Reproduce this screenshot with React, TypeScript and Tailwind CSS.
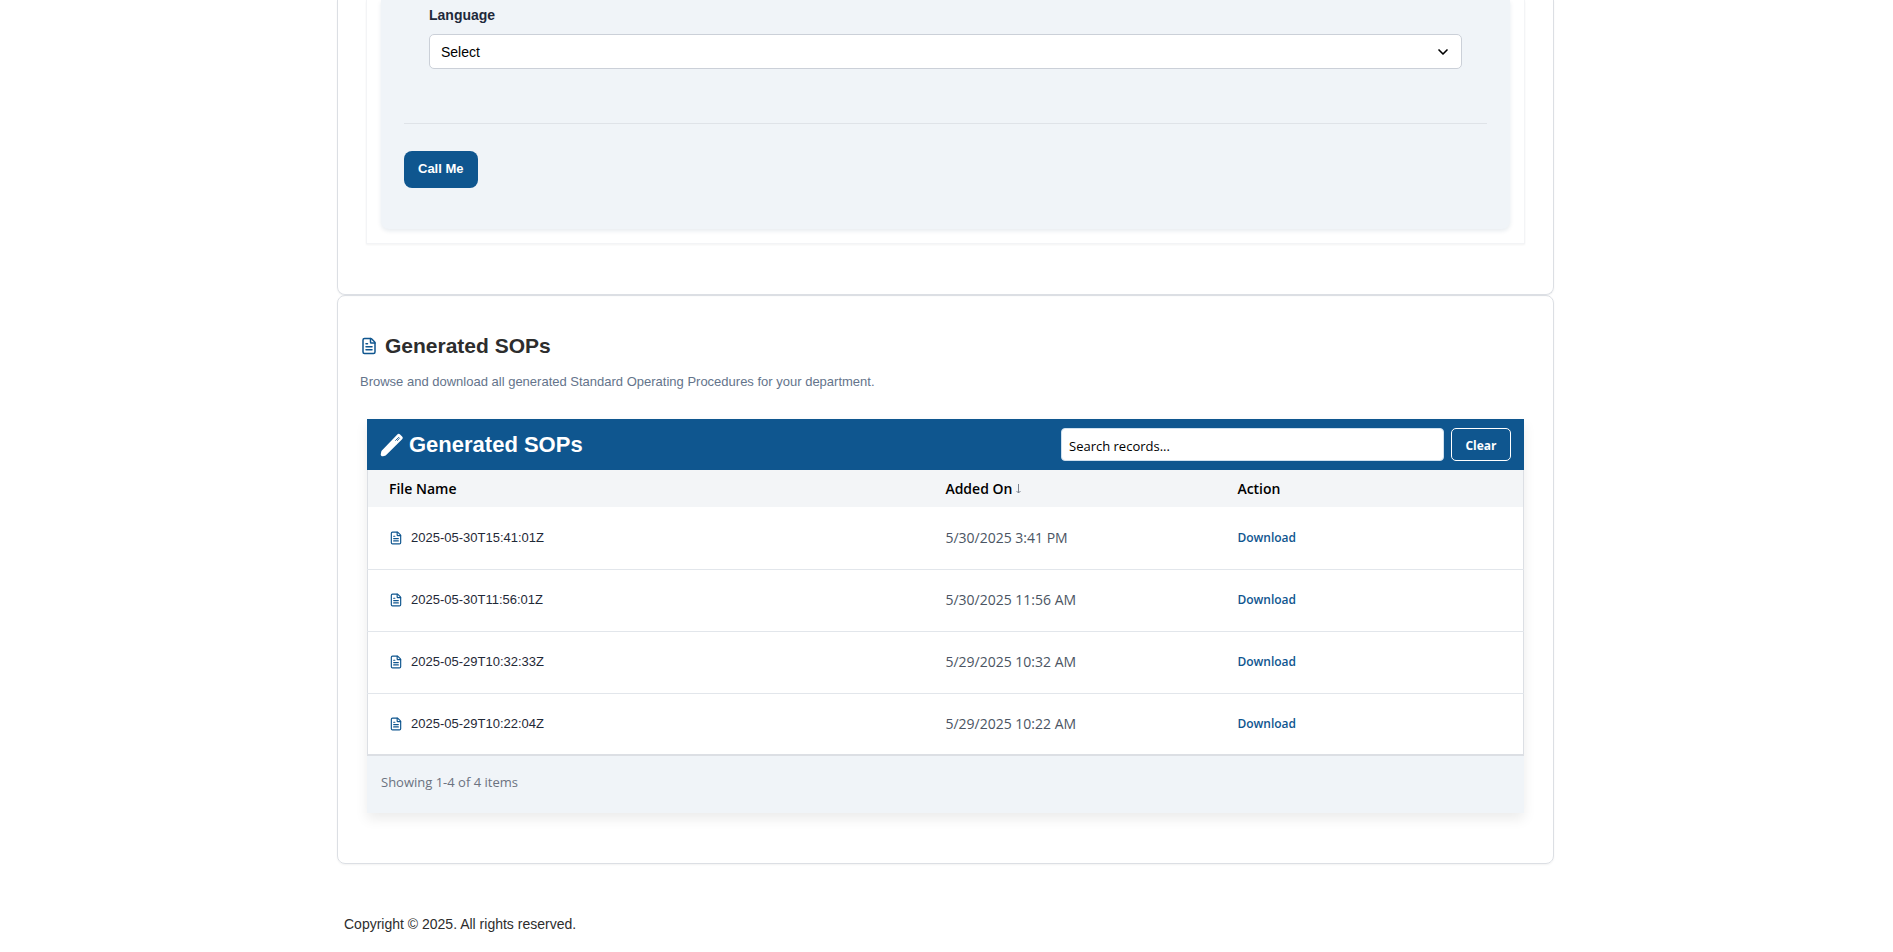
import React from 'react';
import { ChevronDown, FileText } from 'lucide-react';

interface SopFile {
  name: string;
  addedOn: string;
}

const files: SopFile[] = [
  { name: '2025-05-30T15:41:01Z', addedOn: '5/30/2025 3:41 PM' },
  { name: '2025-05-30T11:56:01Z', addedOn: '5/30/2025 11:56 AM' },
  { name: '2025-05-29T10:32:33Z', addedOn: '5/29/2025 10:32 AM' },
  { name: '2025-05-29T10:22:04Z', addedOn: '5/29/2025 10:22 AM' },
];

const PencilIcon: React.FC = () => (
  <svg className="h-6 w-6" viewBox="0 0 24 24" fill="none" aria-hidden="true">
    <path
      d="M17.3 1.4a2 2 0 0 1 2.8 0l2 2a2 2 0 0 1 0 2.8L6.2 22.1a2.5 2.5 0 0 1-1.2.7l-2 .5A1.8 1.8 0 0 1 .8 21.1l.4-2.2a2.5 2.5 0 0 1 .7-1.3z"
      fill="#fff"
    />
    <path d="M15.6 7.4l3-3 .9.9-2.2 2.2" stroke="#0f568f" strokeWidth="0.9" strokeLinecap="round" />
  </svg>
);

const SortDownIcon: React.FC = () => (
  <svg className="h-[10px] w-[5px]" viewBox="0 0 5 10" fill="none" aria-hidden="true">
    <path d="M2.5 0v9M.5 7l2 2 2-2" stroke="#7b828e" />
  </svg>
);

const CallForm: React.FC = () => (
  <section className="rounded-b-lg border border-t-0 border-[#dcdfe4] px-7 pb-[50px] shadow-xs">
    <div className="border border-t-0 border-[#f3f4f6] px-[14px] pb-[14px] shadow-xs">
      <form className="rounded-b-lg bg-[#f0f4f8] px-[23px] pt-1 pb-[41px] shadow-[0_2px_4px_rgba(15,60,100,0.1)]" onSubmit={(e) => e.preventDefault()}>
        <div className="px-[25px]">
          <label htmlFor="language" className="block text-sm leading-[22px] font-bold text-[#1e293b]">
            Language
          </label>
          <div className="relative mt-2">
            <select
              id="language"
              className="block h-[35px] w-full appearance-none rounded-[5px] border border-[#cbd0d8] bg-white px-[11px] text-sm text-black"
            >
              <option>Select</option>
            </select>
            <ChevronDown
              size={16}
              strokeWidth={2.5}
              className="pointer-events-none absolute top-1/2 right-[11px] -translate-y-1/2 text-black"
            />
          </div>
        </div>
        <hr className="mt-[54px] border-[#dfe3e8]" />
        <button
          type="submit"
          className="mt-[27px] block rounded-lg bg-[#0f568f] px-[14px] pt-2 pb-[9px] text-[13px] leading-5 font-bold text-white"
        >
          Call Me
        </button>
      </form>
    </div>
  </section>
);

const SopTable: React.FC = () => (
  <div className="mt-[27px] font-['Open_Sans','Noto_Sans',sans-serif] shadow-[0_6px_12px_rgba(0,0,0,0.08)]">
    <div className="flex items-center justify-between bg-[#0f568f] px-[13px] py-[9px]">
      <h3 className="flex items-center gap-[5px] font-['Liberation_Sans',Arial,sans-serif] text-[22px] leading-7 font-bold text-white">
        <PencilIcon />
        Generated SOPs
      </h3>
      <div className="flex gap-[7px]">
        <input
          type="search"
          aria-label="Search records"
          placeholder="Search records..."
          className="h-[33px] w-[383px] rounded border border-[#cfe0ee] bg-white px-[7px] pt-[3px] text-[13px] text-black placeholder:text-black"
        />
        <button type="button" className="h-[33px] w-[60px] rounded-[5px] border border-white pt-0.5 text-xs font-bold text-white">
          Clear
        </button>
      </div>
    </div>
    <table className="w-full table-fixed border-x border-b-2 border-[#dcdfe4] text-left">
      <thead className="bg-[#f3f5f7] text-sm text-black">
        <tr className="h-[37px]">
          <th className="w-[48%] pl-[21px] font-semibold">File Name</th>
          <th className="w-1/4 pl-[23px] font-semibold">
            <span className="flex items-center gap-1">
              Added On <SortDownIcon />
            </span>
          </th>
          <th className="pl-[26px] font-semibold">Action</th>
        </tr>
      </thead>
      <tbody className="bg-white">
        {files.map((file) => (
          <tr key={file.name} className="h-[62px] border-b border-[#e2e6eb] last:border-b-0">
            <td className="pl-[21px]">
              <span className="flex items-center gap-2 font-['Liberation_Sans',Arial,sans-serif] text-[13px] text-[#1f2937]">
                <FileText size={14} color="#0f568f" />
                {file.name}
              </span>
            </td>
            <td className="pl-[23px] text-sm text-[#4b5563]">{file.addedOn}</td>
            <td className="pl-[26px]">
              <a href="#download" className="block w-fit text-xs font-semibold text-[#0f568f]">
                Download
              </a>
            </td>
          </tr>
        ))}
      </tbody>
    </table>
    <div className="bg-[#f0f4f8] px-[14px] pt-4 pb-[21px] text-[13px] leading-5 text-[#6b7280]">Showing 1-4 of 4 items</div>
  </div>
);

export default function App() {
  return (
    <div className="min-h-screen bg-white pr-0.5 font-['Liberation_Sans',Arial,sans-serif]">
      <main className="mx-auto max-w-[1217px]">
        <CallForm />
        <section className="rounded-lg border border-[#dcdfe4] px-[22px] pt-9 pb-[50px] shadow-xs">
          <h2 className="flex items-center gap-[7px] text-[21px] leading-7 font-bold text-[#2d2d2d]">
            <FileText size={18} color="#0f568f" />
            Generated SOPs
          </h2>
          <p className="mt-3 text-[13px] leading-5 text-[#64748b]">
            Browse and download all generated Standard Operating Procedures for your department.
          </p>
          <div className="px-[7px]">
            <SopTable />
          </div>
        </section>
        <footer className="px-[7px] py-12 text-sm leading-6 text-[#2d2d2d]">Copyright © 2025. All rights reserved.</footer>
      </main>
    </div>
  );
}
